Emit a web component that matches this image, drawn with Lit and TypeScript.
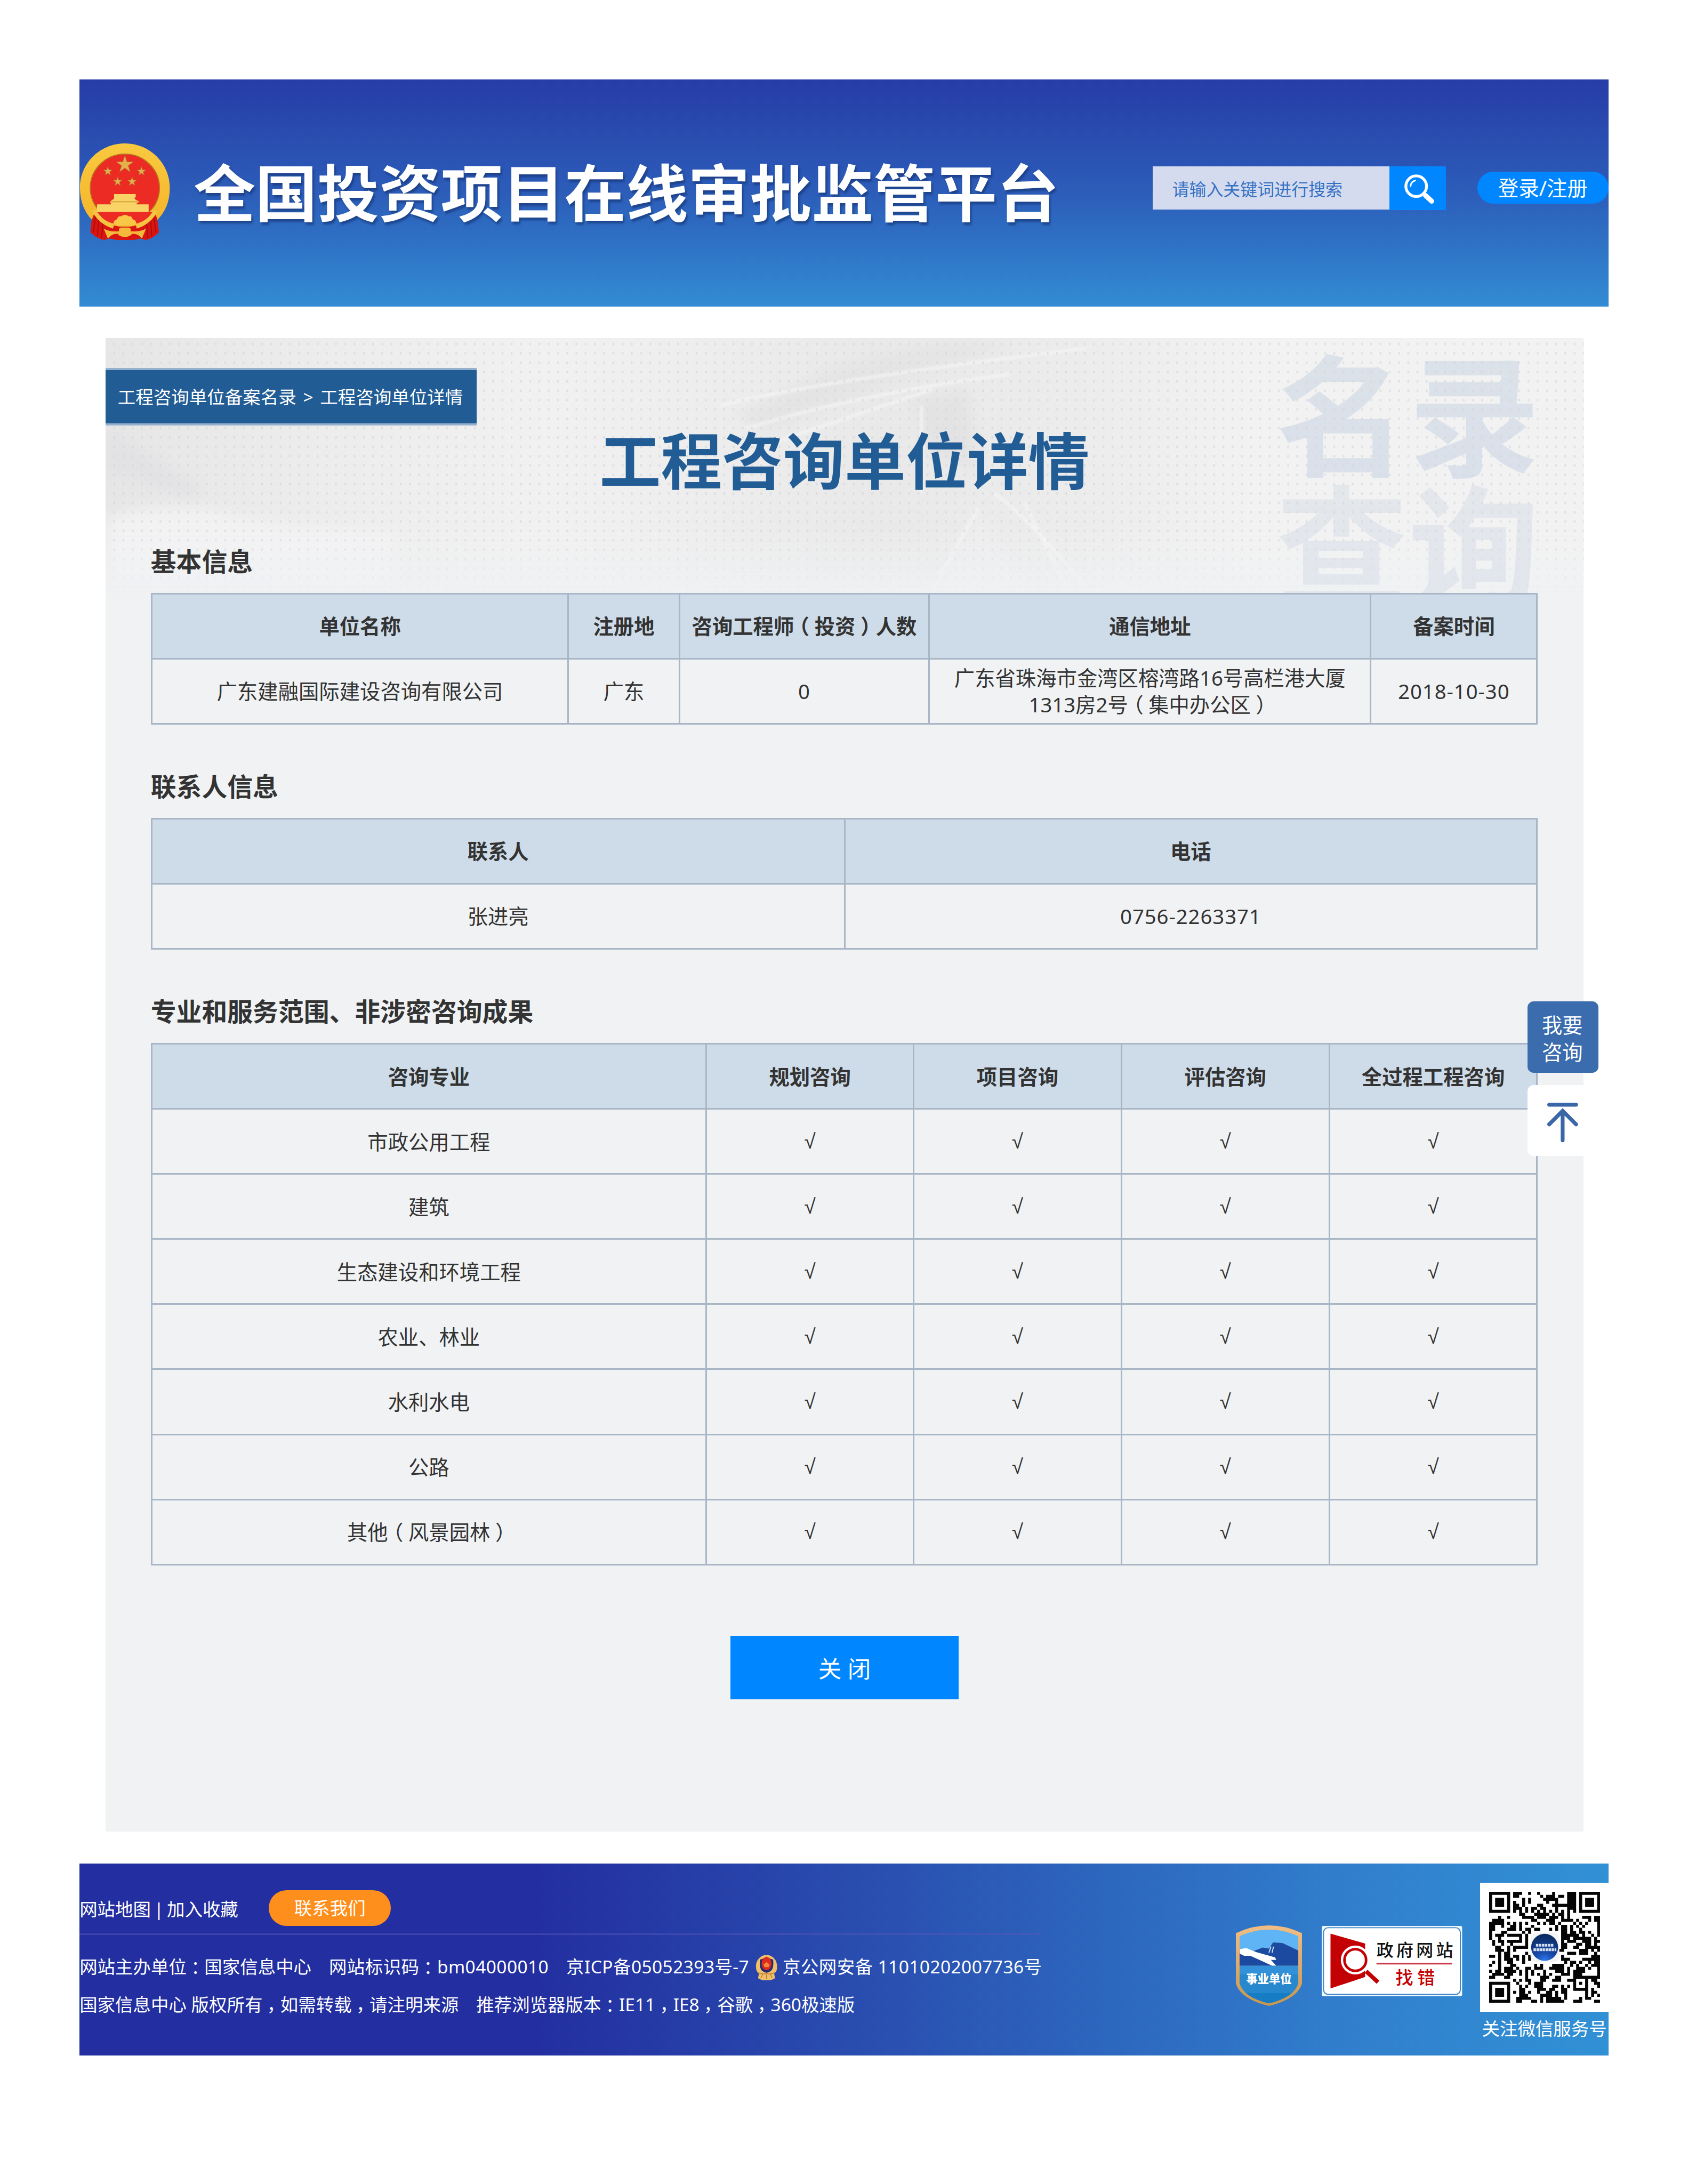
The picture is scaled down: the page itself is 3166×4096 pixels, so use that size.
import { css, html, LitElement, svg } from "lit";
import { customElement, property } from "lit/decorators.js";

// Full-width punctuation sits in the middle of its cell on this site,
// so every mark is set at half width and centred in a one-em box.
function cn(text: string) {
    return text
        .split(/([（），：])/)
        .filter((part) => part !== "")
        .map((part) => (/^[（），：]$/.test(part) ? html`<span class="p">${part}</span>` : part));
}

const punctStyles = css`
    .p {
      display: inline-block;
      width: 1em;
      font-feature-settings: "halt";
      text-align: center;
    }
`;

@customElement("state-emblem")
export class StateEmblem extends LitElement {
    static override styles = css`
    :host {
      display: block;
    }
    svg {
      display: block;
      width: 100%;
      height: 100%;
    }
  `;

    private _star(x: number, y: number, r: number) {
        const points = Array.from({ length: 10 }, (_, i) => {
            const a = (Math.PI / 5) * i - Math.PI / 2;
            const d = i % 2 ? r * 0.38 : r;
            return `${(x + d * Math.cos(a)).toFixed(1)},${(y + d * Math.sin(a)).toFixed(1)}`;
        });
        return svg`<polygon points=${points.join(" ")} fill="#e3b04b" stroke="#a8642a" stroke-width=".7" />`;
    }

    override render() {
        return html`
      <svg viewBox="0 0 176 187">
        <defs>
          <linearGradient id="gold" x1="0" y1="0" x2="0" y2="1">
            <stop offset="0" stop-color="#f9c93f" />
            <stop offset="1" stop-color="#f5b62c" />
          </linearGradient>
        </defs>
        <path d="M26 126L21 172Q34 185 48 187L58 184Q72 188 88 187Q104 188 118 184L128 187Q142 185 154 172L148 126Z" fill="#d91512" />
        <path d="M31 140l-4 32M37 148l-2 32M45 154l-2 30M144 140l4 32M138 148l2 32M130 154l2 30" stroke="#a90d0d" stroke-width="2" fill="none" />
        <path d="M88 0C136 0 175 38 175 86C175 113 166 133 151 148L146 132L30 132L24 148C10 133 1 113 1 86C1 38 40 0 88 0Z" fill="url(#gold)" />
        <path d="M31 132Q48 158 78 161L98 161Q128 158 145 132L136 122L40 122Z" fill="url(#gold)" />
        <ellipse cx="88" cy="86" rx="67" ry="65.5" fill="#ec2b24" stroke="#b5761d" stroke-width="2" />
        ${this._star(88, 41, 18)}
        ${this._star(55, 54, 9.5)}
        ${this._star(120, 54, 9.5)}
        ${this._star(74, 74, 9.5)}
        ${this._star(102, 74, 9.5)}
        <path d="M67 98h42v6l-3 2 4 4 6 2-3 3h-2v3h23v15H34v-15h27v-3h-2l2-4 6-4Z" fill="#fad366" />
        <path d="M61 113h54" stroke="#c88a2b" stroke-width="1.5" />
        <path d="M34 133h108l-8 10q-18 15-46 15q-28 0-46-15Z" fill="#ec2b24" />
        <path d="M28 130q14 24 38 31M148 130q-14 24-38 31" stroke="#f6c443" stroke-width="8" fill="none" />
        <path d="M66 156q0-8 7-9q1-7 8-6q7-6 14 0q7-1 8 6q7 1 7 9l-8 3h-28Z" fill="#f9c748" />
        <path d="M47 165q12 7 30 5q-2-6 4-7h14q6 1 4 7q18 2 30-5l-8 19q-8-10-19-9q-4 6-14 6q-10 0-14-6q-11-1-19 9Z" fill="#f4b93a" />
      </svg>
    `;
    }
}

@customElement("panel-backdrop")
export class PanelBackdrop extends LitElement {
    static override styles = css`
    :host {
      display: block;
    }
    svg {
      display: block;
      overflow: visible;
    }
    text {
      font: 700 254px "Noto Sans CJK SC", sans-serif;
    }
  `;

    override render() {
        return html`
      <svg width="2863" height="620" viewBox="0 0 2863 620">
        <defs>
          <pattern id="dots" x="8" y="3" width="17.9" height="18.1" patternUnits="userSpaceOnUse">
            <rect x="7" y="6" width="3.5" height="5" rx="1.5" fill="#d3d5d8" />
          </pattern>
          <linearGradient id="fade" x1="0" y1="0" x2="0" y2="1">
            <stop offset="0" stop-color="#fff" />
            <stop offset=".6" stop-color="#fff" />
            <stop offset=".82" stop-color="#000" />
          </linearGradient>
          <linearGradient id="tone" x1="0" x2="1">
            <stop offset="0" stop-color="#e6e6e7" />
            <stop offset=".13" stop-color="#ececec" />
            <stop offset=".3" stop-color="#f1f1f1" />
            <stop offset=".52" stop-color="#e9e9e9" />
            <stop offset=".66" stop-color="#ececec" />
            <stop offset=".78" stop-color="#f2f2f2" />
            <stop offset="1" stop-color="#f2f2f2" />
          </linearGradient>
          <linearGradient id="ink" x1="0" y1="0" x2="0" y2="1">
            <stop offset="0" stop-color="#dce2e9" />
            <stop offset="1" stop-color="#dae0ea" />
          </linearGradient>
          <filter id="soft"><feGaussianBlur stdDeviation="14" /></filter>
          <filter id="thin"><feGaussianBlur stdDeviation="2" /></filter>
          <mask id="m"><rect width="2863" height="620" fill="url(#fade)" /></mask>
        </defs>
        <g mask="url(#m)">
          <rect width="2863" height="620" fill="url(#tone)" />
          <g filter="url(#soft)">
            <path d="M0 170L40 200L190 295L170 310L0 260Z" fill="#e2e2e4" />
            <path d="M0 350Q120 310 240 340T560 370V500H0Z" fill="#f2f2f3" />
            <path d="M1220 150L1430 50L1620 10H1760L1500 90L1280 180Z" fill="#e4e4e5" />
            <path d="M1560 120L1670 100L1690 250L1600 230Z" fill="#e3e3e4" />
            <path d="M1580 540L1690 330L1820 540Z" fill="#ededee" />
          </g>
          <path d="M1190 130Q1400 80 1900 20M1240 175Q1450 110 1750 70M1300 200L1600 100M1580 130V300M1780 320L1900 560M1690 330L1560 560M1720 300Q1830 380 1950 560" stroke="#f4f4f4" stroke-width="6" fill="none" opacity=".8" filter="url(#thin)" />
        </g>
        <g fill="url(#ink)">
          <text x="2267" y="248">名</text>
          <text x="2524" y="248">录</text>
          <text x="2267" y="500" opacity=".62">查</text>
          <text x="2523" y="500" opacity=".62">询</text>
        </g>
        <rect width="2863" height="620" fill="url(#dots)" mask="url(#m)" opacity=".65" />
      </svg>
    `;
    }
}

interface Column {
    label: string;
    width: number;
}

@customElement("info-section")
export class InfoSection extends LitElement {
    static override styles = [
        punctStyles,
        css`
    :host {
      display: block;
      width: 2683px;
    }
    h2 {
      margin: 0 0 31px;
      font-size: 49.4px;
      line-height: 60px;
      font-weight: 700;
    }
    table {
      width: 100%;
      table-layout: fixed;
      border-collapse: collapse;
      font-size: 39.6px;
      line-height: 52px;
      text-align: center;
    }
    th,
    td {
      box-sizing: border-box;
      height: 126px;
      padding: 0;
      border: 3.2px solid #a9b6c6;
      white-space: pre-line;
    }
    th {
      background: #cedce9;
      font-weight: 700;
    }
    .num {
      letter-spacing: 0.024em;
    }
    .tick {
      font-family: "Liberation Sans", sans-serif;
      font-size: 40px;
    }
  `,
    ];

    @property()
    heading = "";

    @property({ attribute: false })
    columns: Column[] = [];

    @property({ attribute: false })
    rows: string[][] = [];

    private _cellClass(cell: string) {
        if (cell === "√") return "tick";
        return /^[\d-]+$/.test(cell) ? "num" : "";
    }

    override render() {
        return html`
      <h2>${this.heading}</h2>
      <table>
        <colgroup>
          ${this.columns.map((c) => html`<col style="width:${c.width}px" />`)}
        </colgroup>
        <tr>${this.columns.map((c) => html`<th>${cn(c.label)}</th>`)}</tr>
        ${this.rows.map((row) => html`<tr>${row.map((cell) => html`<td class=${this._cellClass(cell)}>${cn(cell)}</td>`)}</tr>`)}
      </table>
    `;
    }
}

// Dark modules of each QR row, as column ranges
const QR_ROWS = [
    "0-6,8-10,13,16,21,26-28,30-36",
    "0,6,8-9,17,19-21,23-24,26-28,30,36",
    "0,2-4,6,11,13,18-22,26-28,30,32-34,36",
    "0,2-4,6,8,11,13,19,22,26-28,30,32-34,36",
    "0,2-4,6,8-9,11,16-17,21-28,30,32-34,36",
    "0,6,8-10,12,14-15,17-18,22,26-28,30,36",
    "0-6,8,10,12,14,16,18,20,22,24,26,28,30-36",
    "10-11,15-19,21,23-24,26",
    "3,6,11-14,16-18,20-22,24,26,31-33,35-36",
    "1-4,14-15,19-21,24-27,29,33,35-36",
    "0-4,6,8,10,12,16,18,20-21,23,28,30,32,36",
    "0-1,4,7-8,10,14,22,24-25,27,29,31,36",
    "0-1,6-8,10,12-13,15-16,20,22,24-25,27,30,36",
    "0,4-5,11,13,24-25,27-28,30-31,33,36",
    "0,2-4,6-10,12,24-29,31,34,36",
    "0,3,10,12,24-26,28-33,35",
    "1,3-4,6-10,12,24,26-28,31-33,35-36",
    "1,4,7,12,24-25,29-30,32-33,35",
    "2-3,6,8-12,24-25,28-29,32-36",
    "2-4,6,8,23-24,30-32,34,36",
    "3,5-6,12,26-28,30-32,35",
    "0-1,3,5-6,8-9,11,13,24,34-36",
    "3,5-7,9,11,13,24-26,31-36",
    "1,3,6-7,11,25,27-28,30,33,35-36",
    "0,3,7-8,15,17,21-24,27,29,32,34-36",
    "3,5-7,9,12-13,15-17,20-24,26,29-31,33,36",
    "0,2-3,5-8,10,12,14,18,22-24,26,28-31,36",
    "1-4,6-7,10,12,14,16,18,20,24-26,28-30,36",
    "0-1,5-6,12,17-19,22-23,28-36",
    "8,10,12-13,17-18,21-23,26-28,32,34-35",
    "0-6,9,13,15-17,28,30,32,35-36",
    "0,6,10,12,15-17,21-22,24,26,28,32,36",
    "0,2-4,6,10-11,16-18,20-21,24-25,28-32,34",
    "0,2-4,6,8,10-11,13,16,19-20,22,24-25,32,34-35",
    "0,2-4,6,10-12,17-20,22,25,32,34,36",
    "0,6,9-13,17,19-23,25,30,32-33",
    "0-6,9-10,14-15,17,19-24,28-30,35-36",
];

@customElement("qr-code")
export class QrCode extends LitElement {
    static override styles = css`
    :host {
      display: block;
      box-sizing: border-box;
      width: 249px;
      height: 250px;
      padding: 17.5px;
      background: #fff;
    }
    svg {
      display: block;
      width: 215px;
      height: 215px;
    }
  `;

    override render() {
        const d = QR_ROWS.map((row, y) =>
            row
                .split(",")
                .map((range) => {
                    const [a, b = a] = range.split("-").map(Number);
                    return `M${a} ${y}h${b - a + 1}v1h${a - b - 1}z`;
                })
                .join(""),
        ).join("");
        return html`
      <svg viewBox="0 0 37 37">
        <defs>
          <radialGradient id="globe" cx=".5" cy="1" r="1">
            <stop offset="0" stop-color="#2f7df0" />
            <stop offset=".35" stop-color="#1747a8" />
            <stop offset="1" stop-color="#0a2a5c" />
          </radialGradient>
        </defs>
        <path d=${d} fill="#050505" />
        <rect x="13.8" y="13.6" width="9.6" height="9.8" rx="2" fill="#f4f4f4" />
        <circle cx="18.5" cy="18.5" r="4.5" fill="url(#globe)" />
        <path d="M15.6 17.8h6M14.8 19.3h7.6" stroke="#d5deee" stroke-width=".9" stroke-dasharray=".8 .2" />
      </svg>
    `;
    }
}

@customElement("site-header")
export class SiteHeader extends LitElement {
    static override styles = css`
    :host {
      display: flex;
      align-items: flex-start;
      height: 440px;
      background: linear-gradient(#273ca7, #2c5db9 50%, #328cd3);
      color: #fff;
    }
    state-emblem {
      width: 176px;
      height: 187px;
      margin-top: 124px;
    }
    h1 {
      margin: 152px 0 0 45px;
      width: 1680px;
      font-size: 119.7px;
      line-height: 136px;
      font-weight: 700;
      white-space: nowrap;
      text-shadow: 3px 5px 4px rgba(20, 50, 110, 0.6);
    }
    .search {
      display: flex;
      margin: 168px 0 0 auto;
    }
    .field {
      box-sizing: border-box;
      width: 459px;
      height: 84px;
      padding-left: 38px;
      background: #d5dbef;
      color: #3672c4;
      font-size: 33px;
      line-height: 89px;
    }
    .go {
      display: grid;
      place-items: center;
      box-sizing: border-box;
      width: 109px;
      height: 85px;
      padding: 4px 0 0 7px;
      background: #0087ff;
    }
    .go svg {
      width: 62px;
      height: 60px;
    }
    .login {
      width: 254px;
      height: 62px;
      margin: 178px 0 0 61px;
      border-radius: 31px;
      background: #0087ff;
      font-size: 39.8px;
      line-height: 64px;
      text-align: center;
    }
  `;

    override render() {
        return html`
      <state-emblem></state-emblem>
      <h1>全国投资项目在线审批监管平台</h1>
      <div class="search">
        <div class="field">请输入关键词进行搜索</div>
        <div class="go">
          <svg viewBox="0 0 62 60" fill="none" stroke="#fff">
            <circle cx="25" cy="24" r="20" stroke-width="5.5" />
            <path d="M14 24Q15 15 23 13" stroke-width="3" stroke-linecap="round" />
            <path d="M43 42L55 53" stroke-width="9.5" stroke-linecap="round" />
          </svg>
        </div>
      </div>
      <div class="login">登录/注册</div>
    `;
    }
}

@customElement("site-footer")
export class SiteFooter extends LitElement {
    static override styles = [
        punctStyles,
        css`
    :host {
      display: flex;
      height: 371px;
      background: linear-gradient(90deg, #232fa0 0, #232fa0 30%, #2a50b1 53%, #2d68bf 68%, #3180cd 84%, #3191d5);
      color: #fff;
      font-size: 34.55px;
      white-space: nowrap;
    }
    .info {
      width: 1864px;
    }
    .links {
      display: flex;
      align-items: center;
      height: 84px;
      margin-top: 44px;
      padding-bottom: 7px;
      border-bottom: 4px solid rgba(90, 85, 185, 0.5);
      word-spacing: -3px;
    }
    .contact {
      width: 237px;
      height: 69px;
      margin-left: 59px;
      border-radius: 35px;
      background: #ff8f1c;
      line-height: 70px;
      text-align: center;
    }
    .line {
      display: flex;
      align-items: center;
      height: 74px;
    }
    .line:nth-child(2) {
      margin-top: 22px;
    }
    .line span.item {
      margin-right: 34px;
    }
    .code {
      letter-spacing: 0.013em;
    }
    .police {
      width: 46px;
      height: 52px;
      margin: 8px 9px 0 11px;
    }
    .shield {
      width: 128px;
      height: 158px;
      margin: 118px 0 0 375px;
    }
    .report {
      width: 272px;
      height: 136px;
      margin: 121px 0 0 39px;
    }
    .report text,
    .shield text {
      font-family: "Noto Sans CJK SC", sans-serif;
    }
    .wechat {
      width: 249px;
      margin: 37px 0 0 34px;
    }
    .wechat p {
      margin: 0 0 0 4px;
      line-height: 66px;
    }
  `,
    ];

    override render() {
        return html`
      <div class="info">
        <div class="links">
          <span>网站地图 | 加入收藏</span>
          <span class="contact">联系我们</span>
        </div>
        <div class="line">
          <span class="item">${cn("网站主办单位：国家信息中心")}</span>
          <span class="item code">${cn("网站标识码：bm04000010")}</span>
          <span class="code">京ICP备05052393号-7</span>
          <svg class="police" viewBox="0 0 46 52">
            <path d="M23 1C34 1 44 10 44 24Q44 34 38 38L40 47Q32 52 23 51Q14 52 6 47L8 38Q2 34 2 24C2 10 12 1 23 1Z" fill="#efc069" />
            <path d="M23 4Q27 8 36 10Q38 28 31 33Q27 36 23 36Q19 36 15 33Q8 28 10 10Q19 8 23 4Z" fill="#262a72" />
            <ellipse cx="23" cy="18" rx="10" ry="13" fill="#dc2a1c" />
            <path d="M17 20l6-5 6 5-2 5h-8Z" fill="#f08a3a" />
            <path d="M7 36q8 4 16 2q8 2 16-2M12 46l4-8M34 46l-4-8M23 49v-9" stroke="#b87c30" stroke-width="1.5" fill="none" />
          </svg>
          <span class="code">京公网安备 11010202007736号</span>
        </div>
        <div class="line">
          <span class="item">${cn("国家信息中心 版权所有，如需转载，请注明来源")}</span>
          <span>${cn("推荐浏览器版本：IE11，IE8，谷歌，360极速版")}</span>
        </div>
      </div>
      <svg class="shield" viewBox="0 0 128 158">
        <defs>
          <clipPath id="inner"><path d="M7 22Q64 -4 121 22V112Q114 140 64 152Q14 140 7 112Z" /></clipPath>
          <linearGradient id="rim" x1="0" y1="0" x2="0" y2="1">
            <stop offset="0" stop-color="#f2bd84" />
            <stop offset="1" stop-color="#c9964f" />
          </linearGradient>
        </defs>
        <path d="M0 16Q64 -14 128 16V114Q118 144 64 157Q10 144 0 114Z" fill="url(#rim)" />
        <g clip-path="url(#inner)">
          <path d="M0 0H128V79H0Z" fill="#5fb4f5" />
          <path d="M0 79H128V158H0Z" fill="#3291d8" />
          <path d="M0 96H128V158H0Z" fill="#2788cd" />
          <path d="M0 132H128V158H0Z" fill="#167cc4" />
          <path d="M0 56L36 50L52 44L64 46L72 34L90 35L128 53V79H0Z" fill="#1c4aa0" />
          <path d="M8 47L20 45L40 53L76 63L78 68L68 68L78 79L70 79L44 67L28 60L16 60L8 56Z" fill="#fff" />
          <path d="M68 42l-4 12M73 42l-3 12" stroke="#cfe6fa" stroke-width="2" />
        </g>
        <text x="64" y="113" text-anchor="middle" font-size="22" font-weight="900" fill="#fff">事业单位</text>
      </svg>
      <svg class="report" viewBox="0 0 272 136">
        <rect width="272" height="136" rx="3" fill="#eef5fb" />
        <rect x="3.5" y="3.5" width="265" height="129" rx="9" fill="#fff" stroke="#3c85c9" stroke-width="2" />
        <path d="M17 15L84 34V99L17 121Z" fill="#c30003" />
        <circle cx="65" cy="66" r="28" fill="#fff" />
        <path d="M80 82L92 96V80Z" fill="#fff" />
        <circle cx="65" cy="66" r="21" fill="#fff" stroke="#c30003" stroke-width="5" />
        <path d="M86 88L109 109" stroke="#c30003" stroke-width="8" />
        <text x="106" y="59" font-size="33" letter-spacing="5.5" font-weight="500" fill="#111">政府网站</text>
        <path d="M106 73H252" stroke="#cc3a48" stroke-width="3" />
        <text x="143" y="113" font-size="34" letter-spacing="8" font-weight="500" fill="#c30003">找错</text>
      </svg>
      <div class="wechat">
        <qr-code></qr-code>
        <p>关注微信服务号</p>
      </div>
    `;
    }
}

const BASIC_COLUMNS: Column[] = [
    { label: "单位名称", width: 807 },
    { label: "注册地", width: 215 },
    { label: "咨询工程师（投资）人数", width: 484 },
    { label: "通信地址", width: 855 },
    { label: "备案时间", width: 322 },
];

const CONTACT_COLUMNS: Column[] = [
    { label: "联系人", width: 1342 },
    { label: "电话", width: 1341 },
];

const SERVICE_COLUMNS: Column[] = [
    { label: "咨询专业", width: 1074 },
    { label: "规划咨询", width: 402 },
    { label: "项目咨询", width: 402 },
    { label: "评估咨询", width: 403 },
    { label: "全过程工程咨询", width: 402 },
];

const SERVICE_ROWS = [
    "市政公用工程",
    "建筑",
    "生态建设和环境工程",
    "农业、林业",
    "水利水电",
    "公路",
    "其他（风景园林）",
].map((name) => [name, "√", "√", "√", "√"]);

@customElement("app-root")
export class AppRoot extends LitElement {
    static override styles = css`
    :host {
      display: block;
      width: 3166px;
      height: 4096px;
      overflow: hidden;
      background: #fff;
    }
    .page {
      zoom: 0.9685;
      position: relative;
      box-sizing: border-box;
      width: 3269px;
      height: 4229px;
      padding: 154px 154px 0;
      color: #333;
      font-family: "Noto Sans", "Noto Sans CJK SC", sans-serif;
    }
    .panel {
      position: relative;
      box-sizing: border-box;
      width: 2863px;
      height: 2892px;
      margin: 61px 0 62px 50px;
      padding-top: 57px;
      background: #f0f2f4;
    }
    panel-backdrop {
      position: absolute;
      top: 0;
      left: 0;
    }
    .content {
      position: relative;
    }
    .crumbs {
      box-sizing: border-box;
      width: 719px;
      height: 112px;
      padding-left: 24px;
      border: solid #94b0cd;
      border-width: 5px 0;
      background: #215c95;
      color: #fff;
      font-size: 34.6px;
      line-height: 104px;
      word-spacing: 4px;
      white-space: pre;
    }
    .title {
      margin: 9px 0 106px;
      color: #215c95;
      font-size: 118.6px;
      line-height: 118px;
      font-weight: 700;
      text-align: center;
    }
    .sections {
      display: flex;
      flex-direction: column;
      gap: 90px;
      margin-left: 88px;
    }
    .close {
      width: 441px;
      height: 123px;
      margin: 137px auto 0;
      background: #0087ff;
      color: #fff;
      font-size: 45px;
      line-height: 126px;
      text-align: center;
    }
    .float {
      position: absolute;
      top: 1939px;
      left: 2958px;
      display: flex;
      flex-direction: column;
      gap: 24px;
    }
    .tile {
      box-sizing: border-box;
      width: 138px;
      height: 138px;
      border-radius: 12px;
    }
    .ask {
      padding: 20px 28px;
      background: #3b6cae;
      color: #fff;
      font-size: 39.5px;
      line-height: 52px;
    }
    .top {
      background: #fff;
    }
    .top svg {
      display: block;
      width: 138px;
      height: 138px;
    }
  `;

    override render() {
        return html`
      <div class="page">
        <site-header></site-header>
        <div class="panel">
          <panel-backdrop></panel-backdrop>
          <div class="content">
            <div class="crumbs">工程咨询单位备案名录 &gt; 工程咨询单位详情</div>
            <div class="title">工程咨询单位详情</div>
            <div class="sections">
              <info-section
                heading="基本信息"
                .columns=${BASIC_COLUMNS}
                .rows=${[["广东建融国际建设咨询有限公司", "广东", "0", "广东省珠海市金湾区榕湾路16号高栏港大厦\n1313房2号（集中办公区）", "2018-10-30"]]}
              ></info-section>
              <info-section
                heading="联系人信息"
                .columns=${CONTACT_COLUMNS}
                .rows=${[["张进亮", "0756-2263371"]]}
              ></info-section>
              <info-section
                heading="专业和服务范围、非涉密咨询成果"
                .columns=${SERVICE_COLUMNS}
                .rows=${SERVICE_ROWS}
              ></info-section>
            </div>
            <div class="close">关 闭</div>
          </div>
        </div>
        <site-footer></site-footer>
        <div class="float">
          <div class="tile ask">我要<br />咨询</div>
          <div class="tile top">
            <svg viewBox="0 0 138 138" fill="none" stroke="#3a67a8" stroke-width="7.5" stroke-linecap="round">
              <path d="M42 38H94M68 51V107M42 76L68 50L94 76" />
            </svg>
          </div>
        </div>
      </div>
    `;
    }
}

declare global {
    interface HTMLElementTagNameMap {
        "app-root": AppRoot;
        "info-section": InfoSection;
        "panel-backdrop": PanelBackdrop;
        "qr-code": QrCode;
        "site-footer": SiteFooter;
        "site-header": SiteHeader;
        "state-emblem": StateEmblem;
    }
}
